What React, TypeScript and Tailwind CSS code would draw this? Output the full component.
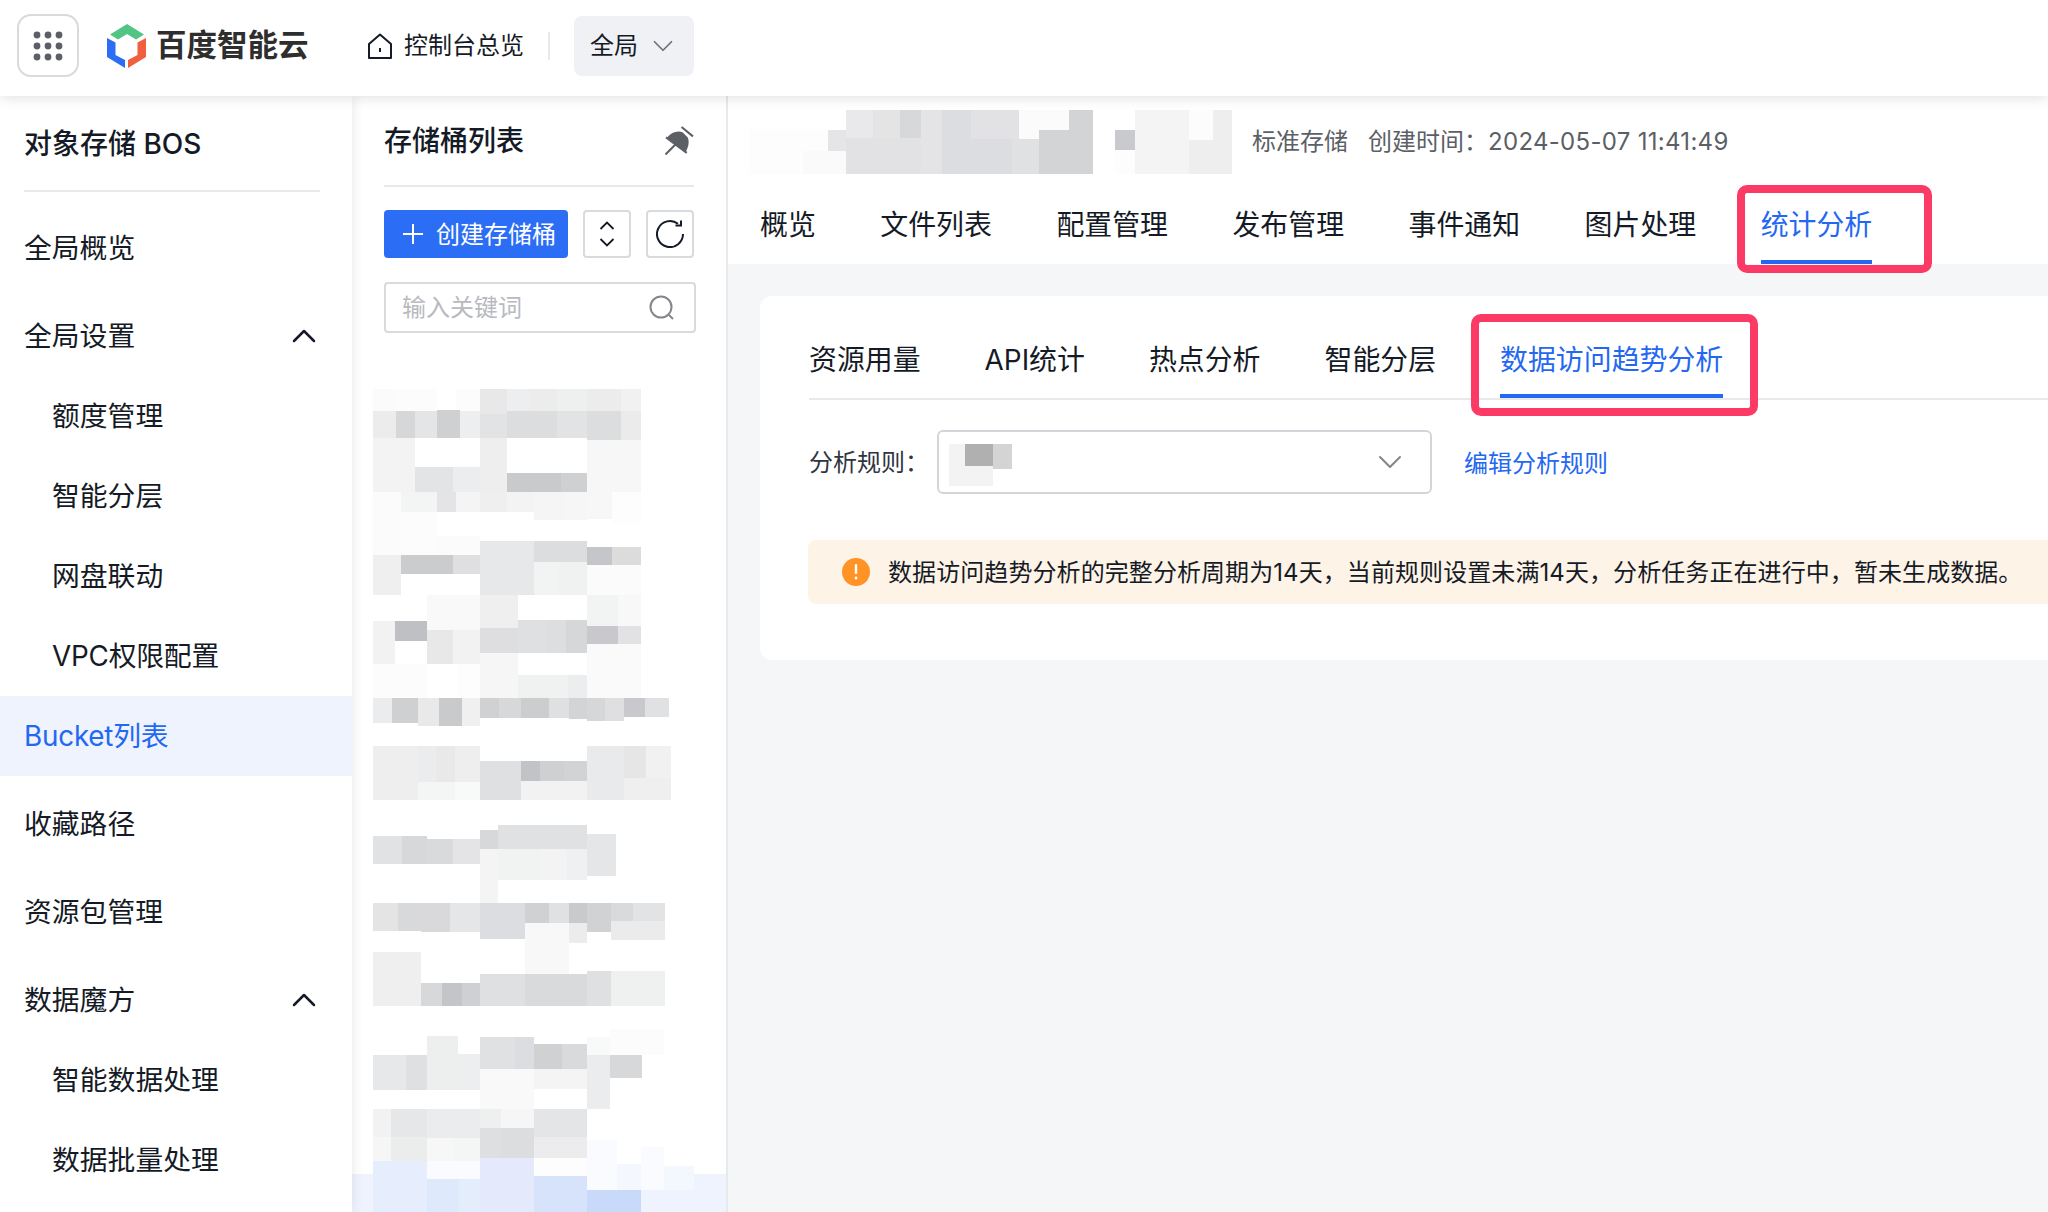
import React from 'react';
import { ChevronDown, ChevronUp } from 'lucide-react';

type Block = [number, number, number, number, string];

// bucket names are pixelated in the picture, values are x1,y1,x2,y2,colour
const listMosaic: Block[] = [
  [-24, 2412, 1098, 2526, '#eef3fe'],
  [39, 57, 108, 123, '#fbfbfb'], [108, 57, 230, 123, '#fcfcfc'], [288, 57, 360, 123, '#fcfcfc'], [360, 57, 441, 132, '#e8e8e8'],
  [441, 57, 506, 123, '#eceef0'], [506, 57, 590, 123, '#ececec'], [590, 57, 681, 123, '#eef0ef'], [681, 57, 782, 123, '#ececec'], [782, 57, 843, 123, '#f1f1f1'],
  [39, 123, 108, 204, '#ececec'], [108, 123, 165, 204, '#d6d7d8'], [165, 123, 231, 204, '#e4e5e6'], [231, 120, 300, 204, '#cfd0d2'], [300, 123, 360, 204, '#eceef0'],
  [360, 132, 441, 204, '#e2e3e5'], [441, 123, 590, 204, '#dcdddf'], [590, 123, 681, 204, '#e2e3e4'], [681, 123, 782, 210, '#dcdddf'], [782, 123, 843, 210, '#ebebeb'],
  [39, 204, 165, 366, '#f3f3f3'], [165, 291, 279, 366, '#e3e4e5'], [279, 291, 360, 366, '#ecedef'], [360, 204, 441, 366, '#eeeeee'], [441, 309, 603, 366, '#c9cacc'],
  [603, 309, 681, 366, '#cfd0d2'], [681, 210, 843, 366, '#f7f7f7'],
  [39, 366, 123, 555, '#fbfbfb'], [123, 366, 231, 426, '#f2f5f4'], [231, 366, 288, 426, '#e4e4e6'], [288, 366, 360, 426, '#f4f4f4'], [360, 366, 441, 426, '#efefef'],
  [441, 366, 522, 426, '#f3f3f3'], [522, 366, 610, 450, '#f5f5f5'], [610, 366, 681, 450, '#f6f6f6'], [681, 366, 756, 447, '#f7f7f7'], [756, 366, 843, 459, '#fdfdfd'],
  [123, 426, 231, 555, '#fcfcfc'], [231, 498, 360, 555, '#fbfbfb'],
  [360, 513, 522, 675, '#e7e8ea'], [522, 513, 681, 576, '#dcddde'], [522, 576, 598, 675, '#f2f4f3'], [598, 576, 681, 675, '#f0f2f1'], [681, 531, 756, 585, '#c5c6c9'],
  [756, 531, 843, 585, '#dcdcdd'], [681, 585, 843, 675, '#fbfbfb'], [39, 555, 123, 675, '#efefef'], [123, 555, 279, 612, '#cbccce'], [279, 555, 360, 612, '#dfdfe1'],
  [201, 675, 360, 780, '#f9f9f9'], [360, 675, 474, 774, '#efefef'], [681, 675, 774, 768, '#f2f4f3'], [774, 675, 843, 768, '#f8f8f8'], [39, 753, 105, 882, '#f2f2f2'],
  [105, 753, 201, 813, '#bfc0c4'], [201, 780, 279, 882, '#e8e8e8'], [279, 780, 360, 882, '#f2f2f2'], [360, 774, 474, 849, '#dedee0'], [474, 750, 558, 849, '#dfe0e2'],
  [558, 750, 618, 849, '#dddee0'], [618, 750, 681, 849, '#d6d7d9'], [681, 768, 774, 822, '#c9c9cd'], [774, 768, 843, 822, '#e2e2e4'], [681, 822, 843, 984, '#fafafa'],
  [39, 882, 201, 984, '#fcfcfc'], [295, 882, 360, 984, '#fdfdfd'], [360, 849, 474, 984, '#f6f6f6'], [474, 915, 624, 984, '#f0f2f1'], [624, 915, 681, 984, '#ecedef'],
  [39, 984, 96, 1059, '#ebecee'], [96, 984, 174, 1059, '#cfd0d2'], [174, 984, 237, 1068, '#e9e9e9'], [237, 984, 306, 1068, '#c9cacc'], [306, 984, 360, 1068, '#f0f0f0'],
  [360, 984, 417, 1044, '#d0d1d3'], [417, 984, 483, 1044, '#d7d8da'], [483, 984, 567, 1044, '#cccdcf'], [567, 984, 627, 1044, '#dfe0e2'], [627, 984, 681, 1047, '#d3d4d6'],
  [681, 984, 735, 1053, '#d6d7d9'], [735, 984, 792, 1053, '#dfdfe2'], [792, 984, 855, 1041, '#c8c8cd'], [855, 984, 927, 1041, '#e0e1e3'],
  [39, 1128, 174, 1290, '#eeeeee'], [174, 1128, 228, 1236, '#ebecee'], [228, 1128, 285, 1236, '#e9e9e9'], [285, 1128, 360, 1236, '#eeeeee'], [174, 1236, 285, 1290, '#f4f6f5'],
  [285, 1236, 360, 1290, '#f8faf9'], [360, 1173, 483, 1290, '#dfe0e2'], [483, 1173, 540, 1233, '#c2c3c7'], [540, 1173, 612, 1233, '#cfd0d2'], [612, 1173, 681, 1233, '#d2d3d5'],
  [483, 1233, 681, 1290, '#f2f2f2'], [681, 1128, 792, 1290, '#e9eaec'], [792, 1128, 858, 1224, '#e6e6e6'], [858, 1128, 933, 1224, '#f1f1f1'], [792, 1224, 933, 1290, '#efefef'],
  [39, 1398, 126, 1482, '#e1e2e3'], [126, 1398, 201, 1482, '#d7d8da'], [201, 1407, 279, 1482, '#d9dadc'], [279, 1407, 360, 1482, '#e4e4e6'], [360, 1380, 414, 1437, '#d7d8da'],
  [414, 1365, 681, 1437, '#e0e1e3'], [681, 1392, 768, 1518, '#e5e6e8'], [360, 1437, 414, 1599, '#f4f4f4'], [414, 1437, 543, 1530, '#f1f2f2'], [543, 1437, 621, 1530, '#f3f3f3'], [621, 1437, 681, 1530, '#eff0f2'],
  [39, 1599, 114, 1683, '#e4e4e4'], [114, 1599, 183, 1683, '#d8d9db'], [183, 1599, 270, 1686, '#d9d9db'], [270, 1599, 360, 1686, '#e5e6e8'], [360, 1599, 495, 1707, '#dcdde0'],
  [495, 1599, 567, 1659, '#d0d1d3'], [567, 1599, 627, 1659, '#e0e1e3'], [627, 1599, 681, 1659, '#c9cacc'], [681, 1599, 753, 1686, '#d1d2d4'], [753, 1599, 819, 1653, '#d9dadc'],
  [819, 1599, 915, 1653, '#e2e3e5'], [753, 1653, 915, 1710, '#ebebeb'], [495, 1659, 627, 1812, '#f8f8f8'], [627, 1659, 681, 1719, '#ececec'],
  [39, 1746, 183, 1908, '#efefef'], [183, 1839, 246, 1908, '#d7d8d9'], [246, 1839, 306, 1908, '#c4c5c8'], [306, 1839, 360, 1908, '#cfd0d3'], [360, 1812, 495, 1908, '#dfe0e2'],
  [495, 1812, 681, 1908, '#d9dadc'], [681, 1803, 753, 1908, '#dfe0e2'], [753, 1803, 915, 1908, '#eff1f0'],
  [201, 1998, 294, 2160, '#ecefee'], [39, 2055, 138, 2160, '#e7e8e9'], [138, 2055, 201, 2160, '#dfe0e2'], [294, 2052, 360, 2160, '#edeeef'], [360, 2001, 465, 2097, '#e0e1e3'],
  [465, 2001, 522, 2097, '#dcdde0'], [522, 2022, 606, 2097, '#d0d1d3'], [606, 2022, 681, 2097, '#d9dadc'], [681, 2001, 750, 2055, '#f7faf9'], [750, 1977, 912, 2055, '#fcfcfc'],
  [681, 2055, 750, 2217, '#ebecee'], [750, 2055, 846, 2124, '#d7d8da'], [360, 2097, 522, 2217, '#f9f9f9'], [522, 2097, 681, 2157, '#f4f4f4'],
  [39, 2217, 93, 2301, '#f2f2f2'], [93, 2217, 201, 2301, '#e6e7e8'], [201, 2217, 360, 2304, '#ebecee'], [360, 2217, 423, 2274, '#eef0ef'], [423, 2217, 522, 2274, '#f6f6f6'],
  [522, 2217, 681, 2301, '#e4e5e7'], [360, 2274, 423, 2364, '#dedfe1'], [423, 2274, 522, 2364, '#dcddde'], [522, 2301, 681, 2364, '#ececee'],
  [39, 2301, 93, 2373, '#f6f6f6'], [93, 2301, 201, 2373, '#ebedec'], [201, 2304, 279, 2373, '#f7f7f7'], [279, 2304, 360, 2373, '#f4f6f5'],
  [39, 2373, 201, 2526, '#e6edfc'], [201, 2373, 360, 2427, '#f9fbfe'], [201, 2427, 297, 2526, '#deeafc'], [297, 2427, 360, 2526, '#e4edfc'], [360, 2364, 522, 2526, '#e4eafc'],
  [522, 2364, 681, 2418, '#fdfdfd'], [522, 2418, 681, 2526, '#d7e3fb'], [681, 2310, 771, 2460, '#fafbff'], [771, 2382, 843, 2460, '#f4f8fe'], [843, 2331, 912, 2460, '#fafbfe'],
  [912, 2388, 1002, 2460, '#f3f7fe'], [681, 2460, 843, 2526, '#c9d9f9'],
];

const titleMosaic: Block[] = [
  [57, 88, 294, 153, '#fdfdfd'], [294, 90, 348, 153, '#e5e5e7'], [348, 30, 429, 114, '#e9e9eb'], [429, 30, 510, 114, '#e4e4e5'], [510, 30, 573, 114, '#d7d8da'],
  [573, 30, 636, 222, '#e4e4e6'], [636, 30, 723, 117, '#dcdde0'], [723, 30, 867, 117, '#e2e2e4'], [867, 30, 927, 117, '#fbfbfb'], [927, 30, 1017, 90, '#fbfbfb'],
  [1017, 30, 1089, 90, '#d3d4d6'], [927, 90, 1089, 222, '#d3d4d6'], [846, 117, 927, 222, '#e0e1e3'], [636, 117, 846, 222, '#dcdde0'], [348, 114, 573, 222, '#e2e2e4'],
  [57, 153, 219, 222, '#fdfdfd'], [219, 153, 348, 222, '#fafafa'], [1155, 90, 1215, 150, '#c9cace'], [1155, 150, 1215, 222, '#fdfdfd'], [1215, 30, 1377, 222, '#f4f4f4'],
  [1377, 30, 1449, 120, '#fcfcfc'], [1449, 30, 1506, 120, '#eeeeee'], [1377, 120, 1506, 222, '#eeeeee'],
];

const Mosaic = ({ blocks, viewBox, className }: { blocks: Block[]; viewBox: string; className: string }) => (
  <svg viewBox={viewBox} className={className} shapeRendering="crispEdges">
    {blocks.map(([x1, y1, x2, y2, fill], i) => (
      <rect key={i} x={x1} y={y1} width={x2 - x1} height={y2 - y1} fill={fill} />
    ))}
  </svg>
);

const TopBar = () => (
  <header className="relative z-30 flex h-24 shrink-0 items-center bg-white pb-[5px] shadow-[0_2px_12px_rgba(7,12,20,0.12)]">
    <button className="ml-[17px] flex h-[63px] w-[62px] items-center justify-center rounded-[14px] border-2 border-[#d9dade]">
      <svg width="32" height="32" viewBox="0 0 32 32" fill="#5c5f66">
        {[5, 16, 27].map(y => [5, 16, 27].map(x => <circle key={`${x}-${y}`} cx={x} cy={y} r="3.4" />))}
      </svg>
    </button>
    <svg width="40" height="44" viewBox="0 0 40 44" className="ml-[28px]">
      <path d="M20 0 37 10.500 29 15.500 20 10 11 15.500 3 10.500Z" fill="#52c484" />
      <path d="M0 14 8.500 18.500V31L18 36V44L0 33Z" fill="#2b6ef5" />
      <path d="M39 14 30.500 18.500V31L21 36V44L39 33Z" fill="#f05f3e" />
    </svg>
    <span className="ml-[9px] w-[152px] text-[30.500px] leading-none font-bold whitespace-nowrap text-[#2e2e2e]">百度智能云</span>
    <svg width="24" height="26" viewBox="0 0 24 26" fill="none" stroke="#151b26" strokeWidth="2" className="ml-[60px]">
      <path d="M12 1.500 23 11V25H1V11Z" strokeLinejoin="round" />
      <path d="M12 15V19" />
    </svg>
    <span className="ml-3 text-2xl">控制台总览</span>
    <span className="ml-6 h-7 w-0.5 bg-[#e8e9eb]" />
    <button className="ml-6 flex h-[60px] w-[120px] items-center rounded-lg bg-[#f0f1f4] pl-4 text-2xl">
      全局
      <ChevronDown size={34} strokeWidth={1.2} className="ml-2 text-[#6e7178]" />
    </button>
  </header>
);

const NavItem = ({ label, className = '', chevron = false }: { label: string; className?: string; chevron?: boolean }) => (
  <div className={`flex items-center justify-between pt-px text-[27.800px] ${className}`}>
    {label}
    {chevron && <ChevronUp size={40} strokeWidth={1.5} className="mr-7 -mt-0.5" />}
  </div>
);

const Sidebar = () => (
  <aside className="relative z-20 h-full w-[352px] shrink-0 bg-white shadow-[0_0_12px_rgba(7,12,20,0.1)]">
    <div className="mr-8 ml-6 flex h-[96px] items-center border-b-2 border-[#e8e9eb] pt-px text-[28px] font-medium">对象存储 BOS</div>
    <nav className="mt-3">
      <NavItem label="全局概览" className="h-[88px] pl-6" />
      <NavItem label="全局设置" className="h-[88px] pl-6" chevron />
      <NavItem label="额度管理" className="-mt-1 h-20 pl-[52px]" />
      <NavItem label="智能分层" className="h-20 pl-[52px]" />
      <NavItem label="网盘联动" className="h-20 pl-[52px]" />
      <NavItem label="VPC权限配置" className="h-20 pl-[52px] tracking-[-0.2px]" />
      <NavItem label="Bucket列表" className="h-20 bg-[#eef3fe] pl-6 tracking-[-0.2px] text-[#2468f2]" />
      <NavItem label="收藏路径" className="mt-1 h-[88px] pl-6" />
      <NavItem label="资源包管理" className="h-[88px] pl-6" />
      <NavItem label="数据魔方" className="h-[88px] pl-6" chevron />
      <NavItem label="智能数据处理" className="-mt-1 h-20 pl-[52px]" />
      <NavItem label="数据批量处理" className="h-20 pl-[52px]" />
    </nav>
  </aside>
);

const BucketPanel = () => (
  <section className="relative z-10 h-full w-[376px] shrink-0 overflow-hidden border-r-2 border-[#e8e9eb] bg-white">
    <div className="mr-8 ml-8">
      <div className="flex h-[91px] items-center justify-between border-b-2 border-[#e8e9eb] text-[28px] font-medium">
        存储桶列表
        <svg width="29" height="29" viewBox="0 0 28 28" fill="#5c5f66">
          <path d="M2 11C6 6 12 4 17 6L22 11C24 16 22 21 20 25Z" />
          <path d="M1 11 21 26" fill="none" stroke="#5c5f66" strokeWidth="2" />
          <path d="M16 1 27 10" fill="none" stroke="#5c5f66" strokeWidth="2" />
          <path d="M0.500 27.500 11 17" fill="none" stroke="#5c5f66" strokeWidth="2" />
        </svg>
      </div>
      <div className="mt-[23px] flex items-center">
        <button className="flex h-12 w-[184px] shrink-0 items-center rounded-[4px] bg-[#2b6ef5] pl-[18px] text-2xl text-white">
          <svg width="22" height="22" viewBox="0 0 22 22" stroke="#ffffff" strokeWidth="2">
            <path d="M11 1V21M1 11H21" />
          </svg>
          <span className="ml-3 pt-px">创建存储桶</span>
        </button>
        <button className="ml-[15px] flex h-12 w-12 shrink-0 items-center justify-center rounded-[4px] border-2 border-[#d9dade]">
          <svg width="16" height="26" viewBox="0 0 16 26" fill="none" stroke="#151b26" strokeWidth="1.800">
            <path d="M1.500 8 8 1.500 14.500 8M1.500 18 8 24.500 14.500 18" />
          </svg>
        </button>
        <button className="ml-[15px] flex h-12 w-12 shrink-0 items-center justify-center rounded-[4px] border-2 border-[#d9dade]">
          <svg width="28" height="28" viewBox="0 0 28 28" fill="none" stroke="#151b26" strokeWidth="2">
            <path d="M27 14A13 13 0 1 1 22 3.800" />
            <path d="M25 0.500V5.500H19.500" />
          </svg>
        </button>
      </div>
      <div className="mt-6 flex h-[51px] w-[312px] items-center justify-between rounded-[4px] border-2 border-[#d9dade] pr-[19px] pl-4 text-2xl text-[#b8babf]">
        输入关键词
        <svg width="26" height="26" viewBox="0 0 26 26" fill="none" stroke="#84868c" strokeWidth="2">
          <circle cx="12" cy="12" r="10.500" />
          <path d="M20 20 24 24" />
        </svg>
      </div>
    </div>
    <Mosaic blocks={listMosaic} viewBox="-24 0 1122 2526" className="mt-[37px] block h-[842px] w-[374px]" />
  </section>
);

const topTabs = ['概览', '文件列表', '配置管理', '发布管理', '事件通知', '图片处理'];
const subTabs = ['资源用量', 'API统计', '热点分析', '智能分层'];

const Main = () => (
  <main className="relative min-w-0 flex-1 bg-[#f5f6f8]">
    <div className="h-[168px] bg-white">
      <div className="flex h-[78px] items-center pt-[14px] pl-[21px] text-2xl text-[#5c5f66]">
        <Mosaic blocks={titleMosaic} viewBox="57 30 1449 192" className="h-16 w-[483px] shrink-0" />
        <span className="ml-5">标准存储</span>
        <span className="ml-5">创建时间：</span>
        <span className="tracking-[0.3px]">2024-05-07 11:41:49</span>
      </div>
      <div className="flex h-[90px] gap-[64.500px] pl-8 text-[27.900px]">
        {topTabs.map(t => (
          <div key={t} className="flex items-center pt-[13px]">{t}</div>
        ))}
        <div className="relative flex items-center pt-[13px] text-[#2468f2]">
          统计分析
          <span className="absolute right-0 bottom-0 left-0 h-1 bg-[#2468f2]" />
          <span className="absolute top-[11px] -right-[60px] -bottom-[9px] -left-[24px] rounded-[10px] border-[8px] border-[#fb3a66]" />
        </div>
      </div>
    </div>
    <div className="mt-8 ml-8 h-[364px] rounded-l-xl bg-white pl-[49px]">
      <div className="flex h-[104px] gap-16 border-b-2 border-[#e8e9eb] text-[27.900px]">
        {subTabs.map(t => (
          <div key={t} className="flex items-center pt-7">{t}</div>
        ))}
        <div className="relative flex items-center pt-7 text-[#2468f2]">
          数据访问趋势分析
          <span className="absolute right-0 bottom-0 left-0 h-1 bg-[#2468f2]" />
          <span className="absolute top-[18px] -right-[35px] -bottom-[18px] -left-[29px] rounded-[10px] border-[8px] border-[#fb3a66]" />
        </div>
      </div>
      <div className="mt-[30px] flex h-16 items-center text-2xl">
        <span className="w-32 shrink-0 pt-0.5 text-[#303540]">分析规则：</span>
        <div className="flex h-16 w-[495px] items-center justify-between rounded-[6px] border-2 border-[#d4d5da] pr-5 pl-2.5">
          <svg width="64" height="42" viewBox="0 0 64 42" shapeRendering="crispEdges" className="mt-[6px]">
            <rect x="0" y="0" width="44" height="42" fill="#f3f3f3" />
            <rect x="16" y="0" width="28" height="22" fill="#b0b0b0" />
            <rect x="44" y="0" width="19" height="25" fill="#d4d4d4" />
          </svg>
          <ChevronDown size={40} strokeWidth={1.2} className="text-[#84868c]" />
        </div>
        <span className="ml-8 pt-[3px] text-[#2468f2]">编辑分析规则</span>
      </div>
      <div className="mt-[46px] -ml-px flex h-16 items-center rounded-l-lg bg-[#fef3e7] pl-[34px] text-2xl">
        <span className="flex h-7 w-7 shrink-0 items-center justify-center rounded-full bg-[#ff9326]">
          <svg width="4" height="16" viewBox="0 0 4 16" fill="#ffffff">
            <rect x="0.800" y="0" width="2.400" height="10" rx="1" />
            <rect x="0.800" y="12.500" width="2.400" height="3" rx="1" />
          </svg>
        </span>
        <span className="ml-[18px] pt-px tracking-[0.08px] whitespace-nowrap">数据访问趋势分析的完整分析周期为14天，当前规则设置未满14天，分析任务正在进行中，暂未生成数据。</span>
      </div>
    </div>
  </main>
);

export default function App() {
  return (
    <div className="flex h-screen w-full flex-col overflow-hidden bg-white text-[#151b26] [font-family:Inter,'Noto_Sans_CJK_SC',sans-serif]">
      <TopBar />
      <div className="flex min-h-0 flex-1">
        <Sidebar />
        <BucketPanel />
        <Main />
      </div>
    </div>
  );
}
